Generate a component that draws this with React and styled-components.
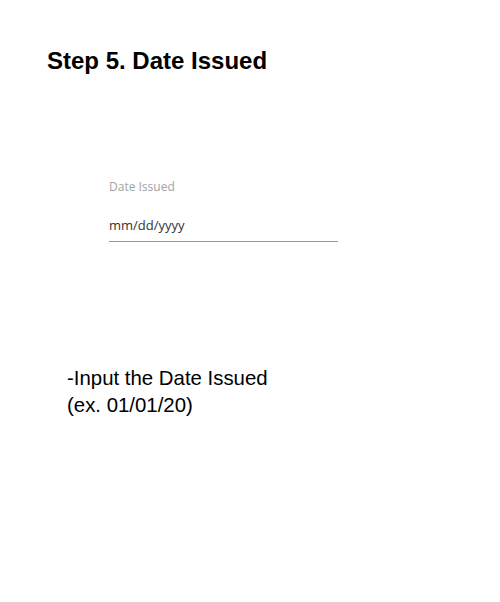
import styled, { createGlobalStyle } from "styled-components"

const GlobalStyle = createGlobalStyle`
  html, body {
    margin: 0;
    padding: 0;
    background: #ffffff;
  }
`

export default function App() {
  return (
    <Page>
      <GlobalStyle />
      <Title>Step 5. Date Issued</Title>
      <Field>
        <Label>Date Issued</Label>
        <DateInput>mm/dd/yyyy</DateInput>
      </Field>
      <Note>
        -Input the Date Issued
        <br />
        (ex. 01/01/20)
      </Note>
    </Page>
  )
}

const Page = styled.div`
  width: 500px;
  height: 602px;
  background: #fff;
  display: flex;
  flex-direction: column;
  overflow: hidden;
`
const Title = styled.h1`
  margin: 47px 0 0 47px;
  font-family: "Liberation Sans", Arial, sans-serif;
  font-weight: 700;
  font-size: 24px;
  line-height: 27px;
  color: #000;
`
const Field = styled.div`
  margin: 105px 0 0 109px;
  width: 229px;
  display: flex;
  flex-direction: column;
`
const Label = styled.div`
  font-family: "Open Sans", "Noto Sans", sans-serif;
  font-size: 12px;
  line-height: 16px;
  color: #a3a3a3;
`
const DateInput = styled.div`
  margin-top: 21px;
  padding-bottom: 7px;
  font-family: "Open Sans", "Noto Sans", sans-serif;
  font-size: 13px;
  line-height: 18px;
  color: #333;
  border-bottom: 1px solid #999;
`
const Note = styled.p`
  margin: 123px 0 0 67px;
  font-family: "Liberation Sans", Arial, sans-serif;
  font-size: 20.4px;
  line-height: 27px;
  color: #000;
`
